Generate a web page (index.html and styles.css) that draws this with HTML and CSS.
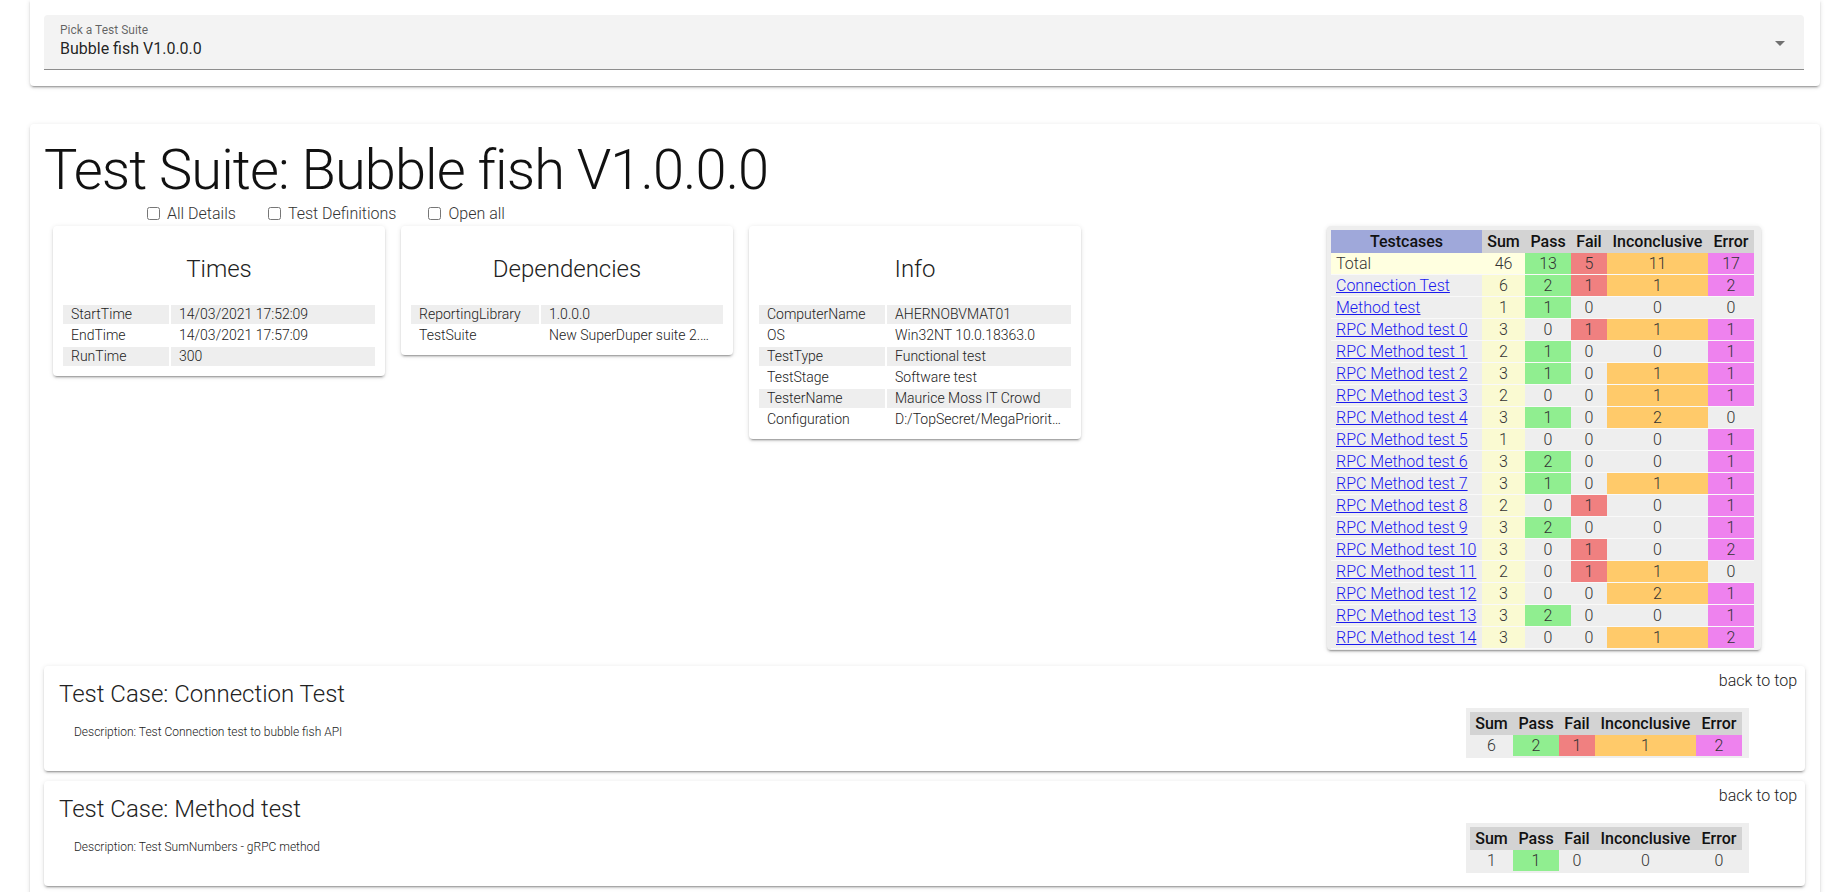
FILE: index.html
```html
<!DOCTYPE html>
<html lang="en">
<head>
<meta charset="utf-8">
<title>Test Suite: Bubble fish V1.0.0.0</title>
<link rel="stylesheet" href="styles.css">
</head>
<body>
<div class="page">
  <div class="card picker">
    <div class="select">
      <div class="select-text">
        <div class="select-label">Pick a Test Suite</div>
        <div class="select-value">Bubble fish V1.0.0.0</div>
      </div>
      <svg class="select-arrow" viewBox="0 0 24 24" width="24" height="24"><path d="M7,10L12,15L17,10H7Z"/></svg>
    </div>
  </div>

  <div class="card suite">
    <h1 class="suite-title">Test Suite: Bubble fish V1.0.0.0</h1>
    <div class="options">
      <label class="opt"><input type="checkbox"> All Details</label>
      <label class="opt"><input type="checkbox"> Test Definitions</label>
      <label class="opt"><input type="checkbox"> Open all</label>
    </div>

    <div class="overview">
      <div class="info-cards">
        <div class="card info-card">
          <h3 class="info-title">Times</h3>
          <table class="kv">
            <colgroup><col class="k-times"><col></colgroup>
            <tr><td>StartTime</td><td>14/03/2021 17:52:09</td></tr>
            <tr><td>EndTime</td><td>14/03/2021 17:57:09</td></tr>
            <tr><td>RunTime</td><td>300</td></tr>
          </table>
        </div>
        <div class="card info-card">
          <h3 class="info-title">Dependencies</h3>
          <table class="kv">
            <colgroup><col class="k-deps"><col></colgroup>
            <tr><td>ReportingLibrary</td><td>1.0.0.0</td></tr>
            <tr><td>TestSuite</td><td>New SuperDuper suite 2.0.0.0</td></tr>
          </table>
        </div>
        <div class="card info-card">
          <h3 class="info-title">Info</h3>
          <table class="kv">
            <colgroup><col class="k-info"><col></colgroup>
            <tr><td>ComputerName</td><td>AHERNOBVMAT01</td></tr>
            <tr><td>OS</td><td>Win32NT 10.0.18363.0</td></tr>
            <tr><td>TestType</td><td>Functional test</td></tr>
            <tr><td>TestStage</td><td>Software test</td></tr>
            <tr><td>TesterName</td><td>Maurice Moss IT Crowd</td></tr>
            <tr><td>Configuration</td><td>D:/TopSecret/MegaPriority/Config.json</td></tr>
          </table>
        </div>
      </div>

      <div class="card stats stats-big">
        <table class="stat-table">
          <colgroup><col class="c-name"><col class="c-sum"><col class="c-pass"><col class="c-fail"><col class="c-inc"><col class="c-err"></colgroup>
          <thead>
            <tr><th class="th-name">Testcases</th><th>Sum</th><th>Pass</th><th>Fail</th><th>Inconclusive</th><th>Error</th></tr>
          </thead>
          <tbody>
            <tr class="total"><td class="name">Total</td><td class="sum">46</td><td class="pass">13</td><td class="fail">5</td><td class="inc">11</td><td class="err">17</td></tr>
            <tr><td class="name"><a href="#">Connection Test</a></td><td class="sum">6</td><td class="pass">2</td><td class="fail">1</td><td class="inc">1</td><td class="err">2</td></tr>
            <tr><td class="name"><a href="#">Method test</a></td><td class="sum">1</td><td class="pass">1</td><td>0</td><td>0</td><td>0</td></tr>
            <tr><td class="name"><a href="#">RPC Method test 0</a></td><td class="sum">3</td><td>0</td><td class="fail">1</td><td class="inc">1</td><td class="err">1</td></tr>
            <tr><td class="name"><a href="#">RPC Method test 1</a></td><td class="sum">2</td><td class="pass">1</td><td>0</td><td>0</td><td class="err">1</td></tr>
            <tr><td class="name"><a href="#">RPC Method test 2</a></td><td class="sum">3</td><td class="pass">1</td><td>0</td><td class="inc">1</td><td class="err">1</td></tr>
            <tr><td class="name"><a href="#">RPC Method test 3</a></td><td class="sum">2</td><td>0</td><td>0</td><td class="inc">1</td><td class="err">1</td></tr>
            <tr><td class="name"><a href="#">RPC Method test 4</a></td><td class="sum">3</td><td class="pass">1</td><td>0</td><td class="inc">2</td><td>0</td></tr>
            <tr><td class="name"><a href="#">RPC Method test 5</a></td><td class="sum">1</td><td>0</td><td>0</td><td>0</td><td class="err">1</td></tr>
            <tr><td class="name"><a href="#">RPC Method test 6</a></td><td class="sum">3</td><td class="pass">2</td><td>0</td><td>0</td><td class="err">1</td></tr>
            <tr><td class="name"><a href="#">RPC Method test 7</a></td><td class="sum">3</td><td class="pass">1</td><td>0</td><td class="inc">1</td><td class="err">1</td></tr>
            <tr><td class="name"><a href="#">RPC Method test 8</a></td><td class="sum">2</td><td>0</td><td class="fail">1</td><td>0</td><td class="err">1</td></tr>
            <tr><td class="name"><a href="#">RPC Method test 9</a></td><td class="sum">3</td><td class="pass">2</td><td>0</td><td>0</td><td class="err">1</td></tr>
            <tr><td class="name"><a href="#">RPC Method test 10</a></td><td class="sum">3</td><td>0</td><td class="fail">1</td><td>0</td><td class="err">2</td></tr>
            <tr><td class="name"><a href="#">RPC Method test 11</a></td><td class="sum">2</td><td>0</td><td class="fail">1</td><td class="inc">1</td><td>0</td></tr>
            <tr><td class="name"><a href="#">RPC Method test 12</a></td><td class="sum">3</td><td>0</td><td>0</td><td class="inc">2</td><td class="err">1</td></tr>
            <tr><td class="name"><a href="#">RPC Method test 13</a></td><td class="sum">3</td><td class="pass">2</td><td>0</td><td>0</td><td class="err">1</td></tr>
            <tr><td class="name"><a href="#">RPC Method test 14</a></td><td class="sum">3</td><td>0</td><td>0</td><td class="inc">1</td><td class="err">2</td></tr>
          </tbody>
        </table>
      </div>
    </div>

    <div class="card testcase">
      <div class="tc-main">
        <h2 class="tc-title">Test Case: Connection Test</h2>
        <p class="tc-desc">Description: Test Connection test to bubble fish API</p>
      </div>
      <div class="tc-side">
        <a class="back-top" href="#">back to top</a>
        <div class="stats stats-small">
          <table class="stat-table">
            <colgroup><col class="c-sum"><col class="c-pass"><col class="c-fail"><col class="c-inc"><col class="c-err"></colgroup>
            <tr><th>Sum</th><th>Pass</th><th>Fail</th><th>Inconclusive</th><th>Error</th></tr>
            <tr><td>6</td><td class="pass">2</td><td class="fail">1</td><td class="inc">1</td><td class="err">2</td></tr>
          </table>
        </div>
      </div>
    </div>

    <div class="card testcase">
      <div class="tc-main">
        <h2 class="tc-title">Test Case: Method test</h2>
        <p class="tc-desc">Description: Test SumNumbers - gRPC method</p>
      </div>
      <div class="tc-side">
        <a class="back-top" href="#">back to top</a>
        <div class="stats stats-small">
          <table class="stat-table">
            <colgroup><col class="c-sum"><col class="c-pass"><col class="c-fail"><col class="c-inc"><col class="c-err"></colgroup>
            <tr><th>Sum</th><th>Pass</th><th>Fail</th><th>Inconclusive</th><th>Error</th></tr>
            <tr><td>1</td><td class="pass">1</td><td>0</td><td>0</td><td>0</td></tr>
          </table>
        </div>
      </div>
    </div>
  </div>
</div>
</body>
</html>
```

FILE: styles.css
```css
html, body {
  margin: 0;
  padding: 0;
  background: #ffffff;
}

body {
  font-family: Roboto, "Liberation Sans", Arial, sans-serif;
  color: rgba(0, 0, 0, 0.87);
}

.page {
  height: 100vh;
  overflow: hidden;
  padding: 0 27px 0 30px;
  box-sizing: border-box;
}

.card {
  background: #ffffff;
  border-radius: 4px;
  box-shadow: 0 3px 1px -2px rgba(0, 0, 0, 0.2), 0 2px 2px 0 rgba(0, 0, 0, 0.14), 0 1px 5px 0 rgba(0, 0, 0, 0.12);
}

/* ---------- picker ---------- */
.picker {
  padding: 15px 16px 16px 14px;
  border-top-left-radius: 0;
  border-top-right-radius: 0;
}

.select {
  display: flex;
  align-items: flex-start;
  background: #f3f3f3;
  border-radius: 4px 4px 0 0;
  border-bottom: 1px solid rgba(0, 0, 0, 0.42);
  padding: 8px 12px 8px 16px;
}

.select-text {
  flex: 1;
}

.select-label {
  font-size: 12px;
  line-height: 14px;
  color: rgba(0, 0, 0, 0.6);
}

.select-value {
  font-size: 16px;
  line-height: 24px;
  color: rgba(0, 0, 0, 0.87);
}

.select-arrow {
  margin-top: 8px;
  fill: rgba(0, 0, 0, 0.54);
}

/* ---------- suite ---------- */
.suite {
  margin-top: 38px;
  padding: 13px 15px 40px 14px;
  border-bottom-left-radius: 0;
  border-bottom-right-radius: 0;
}

.suite-title {
  margin: 0;
  font-family: "Roboto Light", Roboto, "Liberation Sans", Arial, sans-serif;
  font-size: 56px;
  line-height: 66px;
  font-weight: 300;
  color: #111;
  letter-spacing: -0.0165em;
}

.options {
  display: flex;
  gap: 28px;
  padding-left: 99px;
  height: 21px;
  font-size: 16px;
  line-height: 21px;
  font-weight: 300;
  color: #333;
}

.opt {
  display: flex;
  align-items: center;
}

.opt input {
  width: 13px;
  height: 13px;
  margin: 0 7px 0 4px;
}

.overview {
  display: flex;
  align-items: flex-start;
  margin-top: 2px;
  padding-left: 9px;
}

.info-cards {
  display: flex;
  align-items: flex-start;
  gap: 16px;
}

.info-card {
  width: 332px;
  box-sizing: border-box;
  padding: 0 8px 8px 8px;
}

.info-title {
  margin: 27px 0 18px;
  text-align: center;
  font-size: 24px;
  line-height: 32px;
  font-weight: 300;
  color: #222;
}

.kv {
  width: 100%;
  table-layout: fixed;
  border-spacing: 2px;
  font-size: 14px;
  line-height: 19px;
  font-weight: 300;
  color: #222;
}

.kv td {
  padding: 0 8px;
  white-space: nowrap;
  overflow: hidden;
  text-overflow: ellipsis;
}

.kv tr:nth-child(odd) td {
  background: #eeeeee;
}

.k-times { width: 106px; }
.k-deps { width: 128px; }
.k-info { width: 126px; }

/* ---------- stats tables ---------- */
.stats {
  background: #eeeeee;
  padding: 4px 7px 1px 4px;
}

.stats-big {
  margin-left: auto;
  margin-right: 44px;
}

.stats-small {
  padding-bottom: 2px;
  margin-top: 15px;
  margin-right: 48px;
}

.stat-table {
  border-collapse: collapse;
  table-layout: fixed;
  font-size: 16px;
}

.c-name { width: 151px; }
.c-sum { width: 43px; }
.c-pass { width: 46px; }
.c-fail { width: 36px; }
.c-inc { width: 101px; }
.c-err { width: 46px; }

.stat-table th {
  background: #d3d3d3;
  font-weight: 500;
  line-height: 23px;
  padding: 0;
  text-align: center;
  color: #111;
}

.stat-table th.th-name {
  background: #9fa8da;
}

.stat-table td {
  padding: 0;
  font-weight: 300;
  line-height: 21px;
  text-align: center;
  color: #333;
  background: #eeeeee;
}

.stats-big .stat-table td {
  border-bottom: 1px solid #f9f9f9;
}

.stat-table td.name {
  text-align: left;
  padding-left: 5px;
  white-space: nowrap;
}

.stat-table td.name a {
  color: #1a1aee;
}

.stat-table td.sum { background: #fafad2; }
.stat-table tr.total td.name,
.stat-table tr.total td.sum { background: #ffffe0; }
.stat-table td.pass { background: #90ee90; }
.stat-table td.fail { background: #f08080; }
.stat-table td.inc { background: #ffca6a; }
.stat-table td.err { background: #ee82ee; }

/* ---------- test cases ---------- */
.testcase {
  display: flex;
  justify-content: space-between;
  margin-top: 10px;
}

.overview + .testcase {
  margin-top: 16px;
}

.tc-main {
  padding: 12px 0 29px 15px;
}

.tc-title {
  margin: 0;
  font-size: 24px;
  line-height: 32px;
  font-weight: 300;
  color: #222;
}

.tc-desc {
  margin: 13px 0 0;
  padding-left: 15px;
  font-size: 12px;
  line-height: 18px;
  font-weight: 300;
  color: #222;
}

.tc-side {
  display: flex;
  flex-direction: column;
  align-items: flex-end;
  padding: 3px 8px 13px 0;
}

.back-top {
  font-size: 16px;
  line-height: 24px;
  font-weight: 300;
  color: #222;
  text-decoration: none;
}
```
